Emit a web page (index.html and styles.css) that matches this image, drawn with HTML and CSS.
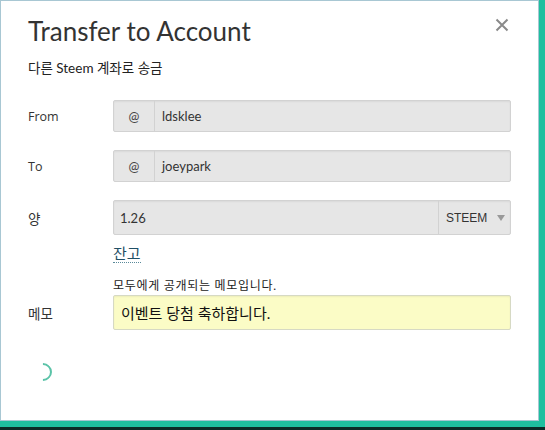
FILE: index.html
```html
<!DOCTYPE html>
<html lang="ko">
<head>
  <meta charset="UTF-8">
  <title>Transfer to Account</title>
  <link rel="stylesheet" href="styles.css">
</head>
<body>
  <div class="page">
    <div class="modal">
      <button class="close" aria-label="Close">
        <svg width="14" height="14" viewBox="0 0 14 14"><path d="M1.5 1.5 L12.5 12.5 M12.5 1.5 L1.5 12.5" stroke="#8a8a8a" stroke-width="2"/></svg>
      </button>
      <h1>Transfer to Account</h1>
      <p class="subtitle">다른 Steem 계좌로 송금</p>

      <div class="row">
        <label>From</label>
        <div class="field">
          <span class="addon">@</span>
          <span class="value">ldsklee</span>
        </div>
      </div>

      <div class="row">
        <label>To</label>
        <div class="field">
          <span class="addon">@</span>
          <span class="value">joeypark</span>
        </div>
      </div>

      <div class="row row-amount">
        <label class="label-ko">양</label>
        <div class="field field-tall">
          <span class="value">1.26</span>
          <span class="select">STEEM <i class="caret"></i></span>
        </div>
      </div>
      <div class="row row-extra">
        <span></span>
        <a class="balance" href="#">잔고</a>
      </div>

      <div class="row row-hint">
        <span></span>
        <p class="hint">모두에게 공개되는 메모입니다.</p>
      </div>
      <div class="row row-memo">
        <label class="label-ko">메모</label>
        <div class="field field-memo">
          <span class="value">이벤트 당첨 축하합니다.</span>
        </div>
      </div>

      <div class="spinner"></div>
    </div>
    <div class="bottom-bar"></div>
  </div>
</body>
</html>
```

FILE: styles.css
```css
body {
  margin: 0;
  font-family: 'Lato', 'Noto Sans CJK KR', sans-serif;
  color: #333;
  background: #1fbf9f;
}

.page {
  width: 545px;
  height: 430px;
  display: flex;
  flex-direction: column;
  overflow: hidden;
}

.modal {
  position: relative;
  box-sizing: border-box;
  width: 539px;
  height: 421px;
  background: #fff;
  border: 1px solid #a8c7d3;
  padding: 0 27px;
}

.bottom-bar {
  margin-top: 6px;
  flex: 1;
  background: #0c2b27;
}

.close {
  position: absolute;
  top: 17px;
  right: 29px;
  border: none;
  background: none;
  padding: 0;
  line-height: 0;
}

h1 {
  margin: 0;
  padding-top: 14px;
  font-size: 26px;
  font-weight: 400;
  line-height: 32px;
  color: #333;
}

.subtitle {
  margin: 12px 0 0;
  font-size: 13.5px;
  line-height: 18px;
  color: #222;
}

.row {
  display: grid;
  grid-template-columns: 85px 1fr;
  align-items: center;
  margin-top: 18px;
}

.subtitle + .row {
  margin-top: 23px;
}

.row label {
  font-family: 'Open Sans', 'Noto Sans CJK KR', sans-serif;
  font-size: 12.5px;
  color: #333;
}

.row .label-ko {
  font-size: 13.5px;
}

.field {
  display: flex;
  height: 32px;
  box-sizing: border-box;
  background: #e6e6e6;
  border: 1px solid #d2d2d2;
  border-radius: 2px;
  box-shadow: inset 0 1px 2px rgba(0, 0, 0, 0.06);
  font-size: 13px;
  color: #333;
}

.field-tall {
  height: 35px;
}

.addon {
  width: 40px;
  flex: none;
  display: flex;
  align-items: center;
  justify-content: center;
  border-right: 1px solid #d2d2d2;
  color: #444;
}

.value {
  flex: 1;
  display: flex;
  align-items: center;
  padding-left: 7px;
}

.field-tall .value {
  padding-left: 6px;
}

.select {
  width: 72px;
  flex: none;
  display: flex;
  align-items: center;
  gap: 10px;
  padding-left: 7px;
  box-sizing: border-box;
  border-left: 1px solid #d2d2d2;
  font-family: 'Liberation Sans', sans-serif;
  font-size: 12px;
}

.caret {
  width: 0;
  height: 0;
  border-left: 4px solid transparent;
  border-right: 4px solid transparent;
  border-top: 6px solid #999;
}

.row-extra {
  margin-top: 9px;
}

.balance {
  justify-self: start;
  font-size: 15px;
  line-height: 18px;
  color: #1f4f66;
  text-decoration: none;
  border-bottom: 1px dotted #5a8a9a;
}

.row-hint {
  margin-top: 16px;
}

.hint {
  margin: 0;
  font-size: 12px;
  line-height: 14px;
  letter-spacing: 0.7px;
  color: #222;
}

.row-memo {
  margin-top: 2px;
}

.field-memo {
  height: 35px;
  background: #fbfcc6;
  border-color: #d6d9c4;
}

.field-memo .value {
  font-size: 15px;
  color: #111;
}

.spinner {
  margin: 33px 0 0 6px;
  width: 14px;
  height: 14px;
  border-radius: 50%;
  border: 2px solid transparent;
  border-right-color: #5bc3a8;
  border-bottom-color: #5bc3a8;
  transform: rotate(-45deg);
}
```
